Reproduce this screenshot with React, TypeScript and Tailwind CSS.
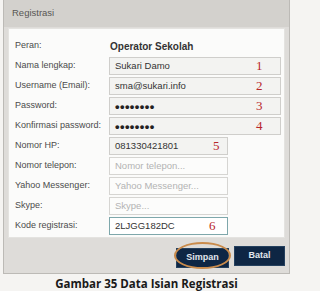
import React from 'react';

const rows = [
  { label: 'Nama lengkap:', value: 'Sukari Damo', wide: true, no: '1' },
  { label: 'Username (Email):', value: 'sma@sukari.info', wide: true, no: '2' },
  { label: 'Password:', value: '••••••••', wide: true, no: '3', pw: true },
  { label: 'Konfirmasi password:', value: '••••••••', wide: true, no: '4', pw: true },
  { label: 'Nomor HP:', value: '081330421801', wide: false, no: '5' },
  { label: 'Nomor telepon:', placeholder: 'Nomor telepon...', wide: false },
  { label: 'Yahoo Messenger:', placeholder: 'Yahoo Messenger...', wide: false },
  { label: 'Skype:', placeholder: 'Skype...', wide: false },
  { label: 'Kode registrasi:', value: '2LJGG182DC', wide: false, no: '6', focus: true },
];

type Row = {
  label: string;
  value?: string;
  placeholder?: string;
  wide: boolean;
  no?: string;
  pw?: boolean;
  focus?: boolean;
};

const Field = ({ row }: { row: Row }) => {
  const box = row.focus
    ? 'border-[#7ea7ab] bg-white'
    : row.value
      ? 'border-[#cfcecb] bg-[#f3f3f1]'
      : 'border-[#d6d5d2] bg-[#fcfcfb]';
  return (
    <div className="flex h-[18px] items-center">
      <div className="w-[94px] whitespace-nowrap text-[9px] text-[#4b4b4b]">{row.label}</div>
      <div
        className={`relative flex h-[18px] items-center border pl-[5px] ${box} ${row.wide ? 'w-[172px]' : 'w-[119px]'}`}
      >
        {row.value ? (
          <span
            className={
              row.pw
                ? 'text-[13px] font-bold leading-none tracking-[0.4px] text-[#222]'
                : 'text-[9.5px] text-[#333]'
            }
          >
            {row.value}
          </span>
        ) : (
          <span className="text-[9.5px] text-[#b3b3b3]">{row.placeholder}</span>
        )}
        {row.no && (
          <span
            className={`absolute top-0 font-['Liberation_Serif',serif] text-[13px] leading-[16px] text-[#b8262a] ${
              row.wide ? 'left-[146px]' : row.no === '5' ? 'left-[103px]' : 'left-[99px]'
            }`}
          >
            {row.no}
          </span>
        )}
      </div>
    </div>
  );
};

export default function App() {
  return (
    <div className="h-[291px] w-[320px] overflow-hidden bg-[#f5f4f2] pl-[3px] font-['Liberation_Sans',Arial,sans-serif]">
      <div className="w-[287px] border border-t-0 border-[#bcbab6] bg-[#dedcd9]">
        <div className="flex h-[27px] items-center bg-[#d3d1cd] pl-[8px] text-[9.5px] text-[#585654]">Registrasi</div>
        <div className="mx-[4px] mt-[1px] flex h-[210px] flex-col gap-[2px] border border-[#e4e3e0] bg-[#fbfbfa] pl-[6px] pt-[8px]">
          <div className="flex h-[18px] items-center">
            <div className="w-[94px] text-[9px] text-[#4b4b4b]">Peran:</div>
            <div className="pl-[1px] text-[10px] font-bold text-[#333]">Operator Sekolah</div>
          </div>
          {rows.map((r) => (
            <Field key={r.label} row={r} />
          ))}
        </div>
        <div className="flex h-[35px] items-center justify-end gap-[5px] pr-[4px]">
          <div className="relative">
            <button className="h-[20px] w-[53px] border border-[#24405e] bg-[#0e2644] text-[9px] font-bold text-[#e2e6ee]">
              Simpan
            </button>
            <div className="pointer-events-none absolute -inset-x-[2px] -inset-y-[1px] rounded-[50%] border-2 border-[#c98b4c]" />
          </div>
          <button className="h-[20px] w-[51px] border border-[#24405e] bg-[#0e2644] text-[9px] font-bold text-[#e2e6ee]">
            Batal
          </button>
        </div>
      </div>
      <div className="w-[287px] pt-[3px] text-center font-['Open_Sans',sans-serif] text-[11.5px] font-bold leading-[14px] text-[#1a1a1a]">
        Gambar 35 Data Isian Registrasi
      </div>
    </div>
  );
}
